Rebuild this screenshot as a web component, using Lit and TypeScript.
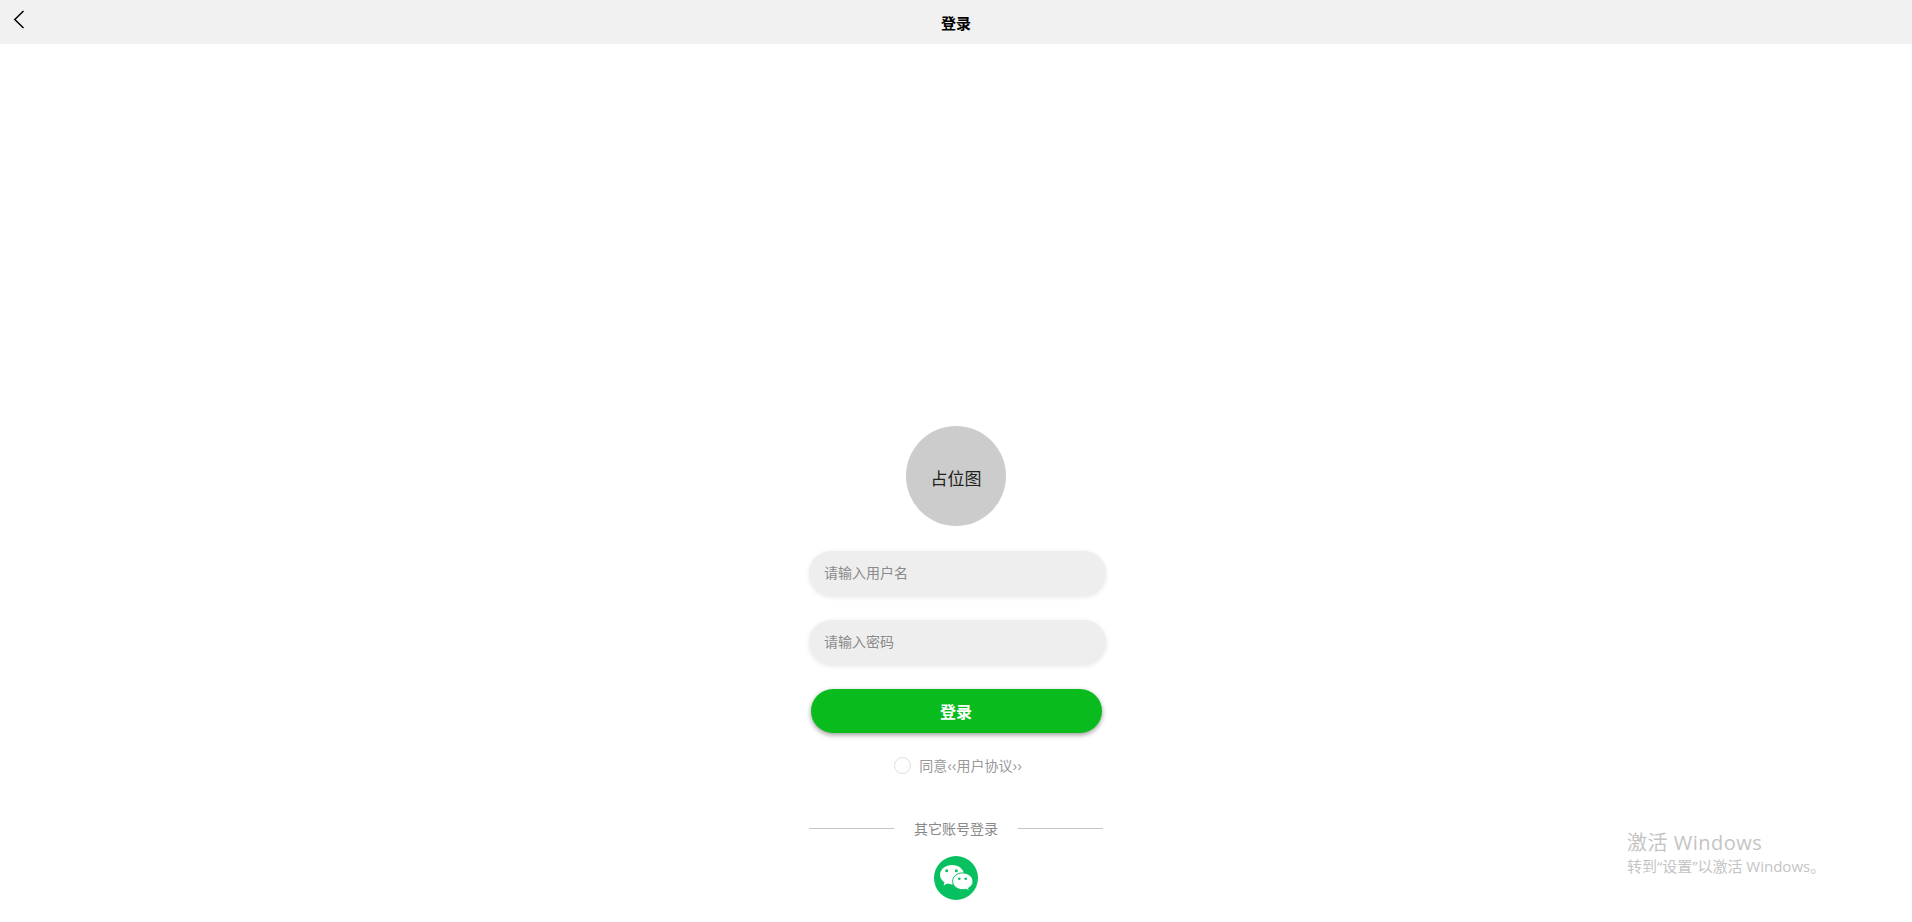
import { html, LitElement, css } from 'lit';
import { customElement } from 'lit/decorators.js';

@customElement('app-root')
export class AppRoot extends LitElement {
  static styles = css`
    :host {
      display: block;
      position: relative;
      height: 922px;
      overflow: hidden;
      background: #fff;
      font-family: "Liberation Sans", "Noto Sans CJK SC", sans-serif;
    }
    .header {
      height: 44px;
      background: #f1f1f1;
      display: flex;
      align-items: center;
      justify-content: center;
      position: relative;
      font-size: 15px;
      font-weight: 700;
      color: #000;
    }
    .back {
      position: absolute;
      left: 12px;
      top: 9px;
      width: 14px;
      height: 21px;
    }
    .form {
      display: flex;
      flex-direction: column;
      align-items: center;
      width: 294px;
      margin: 0 auto;
      padding-top: 382px;
    }
    .avatar {
      width: 100px;
      height: 100px;
      border-radius: 50%;
      background: #cccccc;
      display: flex;
      align-items: center;
      justify-content: center;
      font-size: 17px;
      color: #222;
      padding-top: 3px;
      box-sizing: border-box;
    }
    .field {
      align-self: flex-start;
      width: 297px;
      height: 45px;
      box-sizing: border-box;
      border-radius: 23px;
      background: #eeeeee;
      box-shadow: 0 1px 5px rgba(0, 0, 0, 0.1);
      display: flex;
      align-items: center;
      padding: 0 0 3px 15px;
      font-size: 14px;
      color: #8a8a8a;
    }
    .user { margin-top: 25px; }
    .pass { margin-top: 24px; }
    .submit {
      width: 291px;
      height: 44px;
      margin-top: 24px;
      border-radius: 22px;
      background: #09bb1d;
      box-shadow: 0 2px 5px rgba(0, 0, 0, 0.4);
      color: #fff;
      font-size: 16px;
      font-weight: 700;
      display: flex;
      align-items: center;
      justify-content: center;
      padding-bottom: 1px;
      box-sizing: border-box;
    }
    .agree {
      display: flex;
      align-items: center;
      gap: 8px;
      height: 18px;
      margin-top: 23px;
      margin-left: 4px;
      font-size: 14px;
      color: #999;
    }
    .radio {
      width: 17px;
      height: 17px;
      box-sizing: border-box;
      border: 1px solid #ddd;
      border-radius: 50%;
    }
    .other {
      align-self: stretch;
      display: flex;
      align-items: center;
      justify-content: space-between;
      height: 16px;
      margin-top: 46px;
      font-size: 14px;
      color: #888;
    }
    .line {
      width: 85px;
      height: 1px;
      background: #c4c4c4;
    }
    .wechat {
      width: 44px;
      height: 44px;
      margin-top: 20px;
    }
    .watermark {
      position: absolute;
      left: 1627px;
      top: 829px;
      color: #c4c4c4;
      font-family: "Open Sans", "Noto Sans CJK SC", sans-serif;
    }
    .watermark div:first-child { font-size: 20px; line-height: 28px; letter-spacing: 0.5px; }
    .watermark div:last-child { font-size: 15px; line-height: 18px; }
  `;

  render() {
    return html`
      <div class="header">
        <svg class="back" viewBox="0 0 14 21" fill="none" stroke="#000" stroke-width="1.5">
          <path d="M11.500 2 L2.800 10.500 L11.500 19"></path>
        </svg>
        登录
      </div>
      <div class="form">
        <div class="avatar">占位图</div>
        <div class="field user">请输入用户名</div>
        <div class="field pass">请输入密码</div>
        <div class="submit">登录</div>
        <div class="agree"><span class="radio"></span>同意‹‹用户协议››</div>
        <div class="other">
          <span class="line"></span>
          <span>其它账号登录</span>
          <span class="line"></span>
        </div>
        <svg class="wechat" viewBox="0 0 44 44">
          <circle cx="22" cy="22" r="22" fill="#07c160"></circle>
          <path fill="#fff" d="M18 9c-6.600 0-12 4.400-12 9.800 0 3.100 1.800 5.800 4.500 7.600l-.9 3.200 3.700-2c1.400.5 3 .8 4.700.8 6.600 0 12-4.400 12-9.800S24.600 9 18 9z"></path>
          <path fill="#fff" stroke="#07c160" stroke-width="1" d="M39 25.300c0-4.600-4.500-8.400-10.200-8.400s-10.200 3.800-10.200 8.400 4.500 8.400 10.200 8.400c1.200 0 2.300-.2 3.400-.5l3.200 1.800-.9-2.900c2.800-1.500 4.500-3.900 4.500-6.800z"></path>
          <circle cx="12.700" cy="14.700" r="1.500" fill="#07c160"></circle>
          <circle cx="22.300" cy="14.700" r="1.500" fill="#07c160"></circle>
          <circle cx="25.300" cy="22.700" r="1.300" fill="#07c160"></circle>
          <circle cx="31.700" cy="22.700" r="1.300" fill="#07c160"></circle>
        </svg>
      </div>
      <div class="watermark">
        <div>激活 Windows</div>
        <div>转到“设置”以激活 Windows。</div>
      </div>
    `;
  }
}

declare global {
  interface HTMLElementTagNameMap {
    'app-root': AppRoot;
  }
}
